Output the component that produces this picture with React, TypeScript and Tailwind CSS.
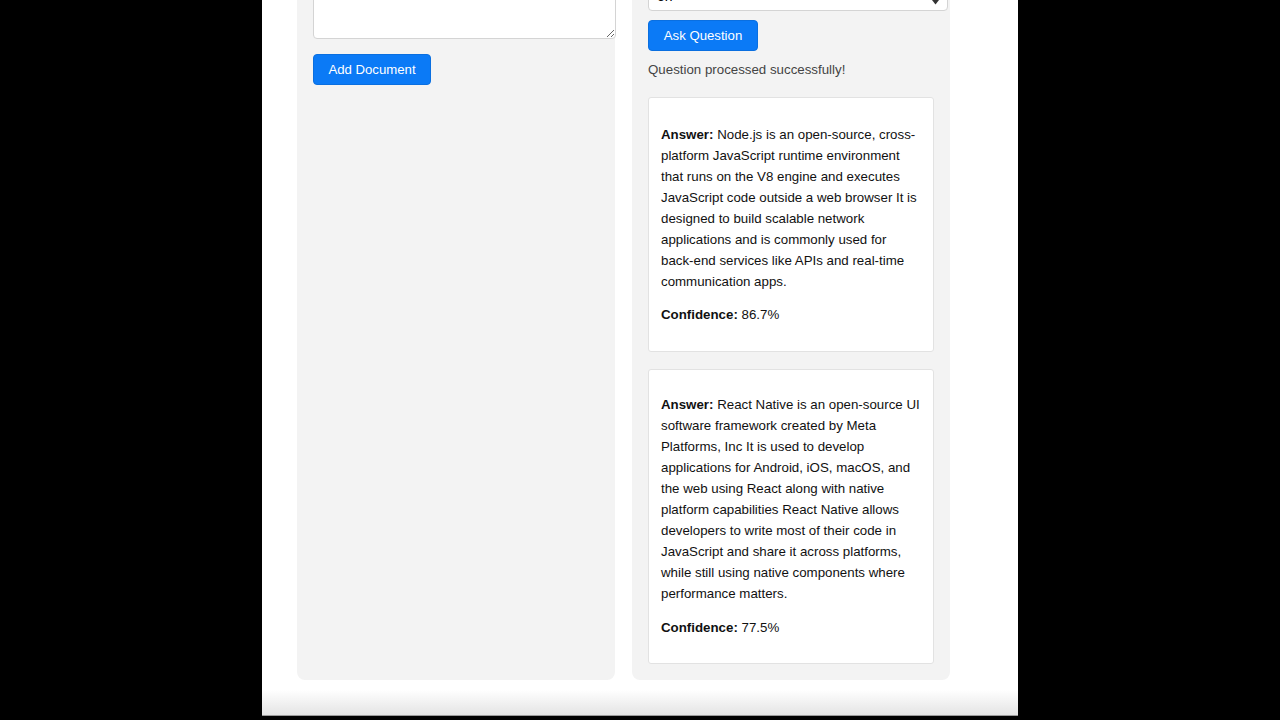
import { useState } from 'react';

interface Answer {
  id: number;
  text: string;
  confidence: string;
}

const answers: Answer[] = [
  {
    id: 1,
    text: 'Node.js is an open-source, cross-platform JavaScript runtime environment that runs on the V8 engine and executes JavaScript code outside a web browser It is designed to build scalable network applications and is commonly used for back-end services like APIs and real-time communication apps.',
    confidence: '86.7%',
  },
  {
    id: 2,
    text: 'React Native is an open-source UI software framework created by Meta Platforms, Inc It is used to develop applications for Android, iOS, macOS, and the web using React along with native platform capabilities React Native allows developers to write most of their code in JavaScript and share it across platforms, while still using native components where performance matters.',
    confidence: '77.5%',
  },
];

export default function App() {
  const [doc, setDoc] = useState('');
  const [lang, setLang] = useState('en');

  return (
    <div
      className="h-[720px] overflow-hidden bg-black"
      style={{ fontFamily: '"Liberation Sans", Arial, sans-serif' }}
    >
      <div className="ml-[262px] w-[756px] h-[716px] bg-white flex flex-col overflow-hidden">
        <div className="flex-1 pl-[35px] overflow-hidden">
          <div className="grid grid-cols-[318px_318px] gap-[17px] -mt-[117px] h-[797px]">
            {/* left: add document */}
            <div className="bg-[#f3f3f3] rounded-lg p-4 flex flex-col items-start">
              <textarea
                value={doc}
                onChange={(e) => setDoc(e.target.value)}
                className="block w-[303px] h-[140px] bg-white border border-[#d4d4d4] rounded-[4px] p-2 text-sm"
              />
              <button className="mt-[15px] h-[31px] w-[118px] bg-[#0b7af6] text-white text-[13.2px] rounded-[4px] border border-[#0a6fe0]">
                Add Document
              </button>
            </div>

            {/* right: ask question */}
            <div className="bg-[#f3f3f3] rounded-lg p-4 flex flex-col items-start">
              <div className="h-[74px] w-full" />
              <div className="relative w-[300px]">
                <select
                  value={lang}
                  onChange={(e) => setLang(e.target.value)}
                  className="block w-full h-[38px] appearance-none bg-white border border-[#d4d4d4] rounded-[4px] pl-2 text-[14px] leading-[14px] pt-[8px] text-black"
                >
                  <option value="en">en</option>
                </select>
                <svg className="absolute right-[9px] bottom-[6px]" width="7" height="6" viewBox="0 0 7 6">
                  <path d="M0 1h7L3.5 5.5z" fill="#333" />
                </svg>
              </div>
              <button className="mt-[9px] h-[31px] w-[110px] bg-[#0b7af6] text-white text-[13.2px] rounded-[4px] border border-[#0a6fe0]">
                Ask Question
              </button>
              <p className="mt-[9px] text-[13.3px] leading-5 text-[#444]">Question processed successfully!</p>

              <div className="mt-[17px] flex flex-col gap-[17px] w-[286px]">
                {answers.map((a, i) => (
                  <div
                    key={a.id}
                    className={`bg-white border border-[#e2e2e2] rounded-[3px] px-3 text-[13.3px] leading-[21px] text-[#111] ${
                      i === 0 ? 'pt-[26px] pb-[26px]' : 'pt-[24px] pb-[25px]'
                    }`}
                  >
                    <p>
                      <strong>Answer:</strong> {a.text}
                    </p>
                    <p className={i === 0 ? 'mt-3' : 'mt-[13px]'}>
                      <strong>Confidence:</strong> {a.confidence}
                    </p>
                  </div>
                ))}
              </div>
            </div>
          </div>
        </div>
        <div className="h-[10px] bg-white" />
        <div className="h-[26px] bg-gradient-to-b from-white to-[#e4e4e4] border-b border-[#9a9a9a]" />
      </div>
    </div>
  );
}
